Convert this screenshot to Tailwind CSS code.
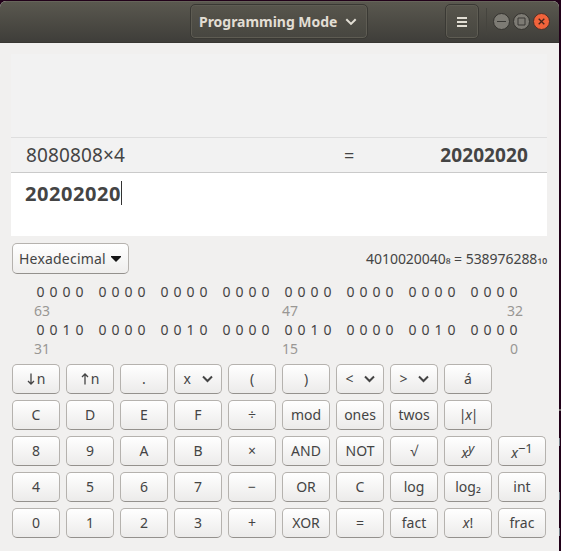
<!DOCTYPE html>
<html lang="en">
<head>
<meta charset="utf-8">
<title>Calculator</title>
<script src="https://cdn.jsdelivr.net/npm/@tailwindcss/browser@4"></script>
</head>
<body class="relative h-[551px] w-[561px] overflow-hidden bg-[#210119] pt-px font-['Noto_Sans','Open_Sans',sans-serif] text-[14px] text-[#444]">
<!-- slivers of the terminal window behind the calculator -->
<div class="absolute left-[559px] top-[409px] h-[2px] w-[2px] bg-[#77706f]"></div>
<div class="absolute left-[559px] top-[438px] h-[8px] w-px bg-[#77808a]"></div>
<div class="absolute left-[559px] top-[492px] h-[8px] w-px bg-[#77808a]"></div>
<div class="absolute left-[559px] top-[528px] h-[8px] w-px bg-[#77808a]"></div>
<main class="flex h-[550px] w-[559px] flex-col overflow-hidden rounded-t-[6px] bg-[#f1f0ef]">
  <header class="flex h-[42px] shrink-0 items-start border-t border-[#66645a] bg-linear-to-b from-[#5a584f] to-[#3e3d39] pt-[2px] shadow-[inset_0_-1px_0_#383733]">
    <button class="ml-[190px] flex h-[35px] w-[178px] shrink-0 items-center rounded-[5px] border border-[#3a3934] bg-linear-to-b from-[#57554c] to-[#474640] pl-[8px] font-bold text-[#e2ded4] shadow-[inset_0_0_0_1px_#5e5c53]">
      <span class="w-[140px] whitespace-nowrap text-left tracking-[-0.03px]">Programming Mode</span>
      <svg class="ml-[6px] h-[8px] w-[12px]" viewBox="0 0 12 8" fill="none" stroke="#e2ded4" stroke-width="2"><path d="M1.3 1.2 6 5.9l4.7-4.7"/></svg>
    </button>
    <button class="ml-[77px] flex h-[35px] w-[34px] shrink-0 items-center justify-center rounded-[5px] border border-[#3a3934] bg-linear-to-b from-[#57554c] to-[#474640] shadow-[inset_0_0_0_1px_#5e5c53]">
      <svg class="h-[10px] w-[10px]" viewBox="0 0 10 10" fill="#e2ded4"><path d="M0 0h10v2H0zM0 4h10v2H0zM0 8h10v2H0z"/></svg>
    </button>
    <div class="ml-[7px] mt-[4px] h-[27px] w-px bg-[#45443e]"></div>
    <div class="ml-[6px] mt-[9px] flex gap-[3px]">
      <svg class="size-[17px]" viewBox="0 0 17 17"><circle cx="8.5" cy="8.5" r="8" fill="#7d7b74" stroke="#34332f"/><path d="M4 8.5h9" stroke="#3a3935" fill="none"/></svg>
      <svg class="size-[17px]" viewBox="0 0 17 17"><circle cx="8.5" cy="8.5" r="8" fill="#7d7b74" stroke="#34332f"/><path d="M5 5h7v7H5z" stroke="#3a3935" fill="none"/></svg>
      <svg class="size-[17px]" viewBox="0 0 17 17"><circle cx="8.5" cy="8.5" r="8" fill="#f0633b" stroke="#4b3029"/><path d="m5.7 5.7 5.6 5.6m0-5.6-5.6 5.6" stroke="#41251c" stroke-width="1.3" fill="none"/></svg>
    </div>
  </header>

  <section class="ml-[11px] mt-[11px] w-[536px] shrink-0 bg-[#f2f2f2]">
    <div class="h-[84px] border-b border-[#dedede]"></div>
    <div class="flex h-[35px] items-center border-b border-[#cacaca] pl-[15px] pr-[19px] text-[19px] leading-[28px]">
      <span class="w-[318px] tracking-[0.13px]">8080808×4</span>
      <span class="w-[40px] text-[18px]">=</span>
      <span class="ml-auto whitespace-nowrap font-bold tracking-[0.1px]">20202020</span>
    </div>
    <div class="flex h-[63px] items-start bg-white pl-[14px] pt-[8px]">
      <span class="text-[20px] font-bold leading-[26px] tracking-[0.55px]">20202020</span><span class="h-[24px] w-px bg-[#333]"></span>
    </div>
  </section>

  <section class="ml-[12px] mt-[7px] flex h-[31px] w-[536px] shrink-0 items-center">
    <button class="flex h-[31px] w-[117px] items-center rounded-[5px] border border-[#b5b2ae] border-b-[#94918d] bg-linear-to-b from-white to-[#efeeed] pl-[6px]">
      <span class="w-[88px] whitespace-nowrap text-left tracking-[0.2px]">Hexadecimal</span>
      <svg class="ml-[4px] h-[6px] w-[10px]" viewBox="0 0 10 6"><path d="M0 0h10v1L5 6 0 1z" fill="#151515"/></svg>
    </button>
    <div class="ml-auto flex whitespace-pre pr-px tracking-[-0.05px]"><span>4010020040</span><span class="-mt-[2px]">₈</span><span> = 538976288</span><span class="-mt-[2px]">₁₀</span></div>
  </section>

  <section id="bits" class="ml-[34px] mt-[8px] h-[76px] w-[490px] shrink-0"></section>

  <section id="keys" class="ml-[12px] mt-[6px] grid w-[534px] shrink-0 grid-cols-[repeat(10,48px)] gap-[6px]"></section>
</main>
<script>
  const rows = [
    ['0000 0000 0000 0000 0000 0000 0000 0000', '63', '47', '32'],
    ['0010 0000 0010 0000 0010 0000 0010 0000', '31', '15', '0']
  ];
  document.getElementById('bits').innerHTML = rows.map(([bits, a, b, c]) =>
    `<div class="flex h-[19px] items-center gap-[10px]">${bits.split(' ').map(g =>
      `<div class="flex">${[...g].map(d => `<span class="w-[13px] text-center">${d}</span>`).join('')}</div>`).join('')}</div>
    <div class="flex h-[19px] items-center text-[#999794]"><span class="w-[248px]">${a}</span><span>${b}</span><span class="ml-auto ${c === '0' ? 'pr-[6px]' : 'pr-px'}">${c}</span></div>`).join('');

  const drop = s => `<span class="w-[18px] text-left">${s}</span><svg class="h-[8px] w-[11px]" viewBox="0 0 11 8" fill="none" stroke="#444" stroke-width="2"><path d="m1 1.5 4.5 4.5L10 1.5"/></svg>`;
  const arrow = (d) => `<svg class="mr-[2px] h-[12px] w-[8px]" viewBox="0 0 8 12" fill="none" stroke="#444" stroke-width="1.3"><path d="${d}"/></svg>n`;
  const keys = [
    arrow('M4 0.5v10.5M1 8l3 3 3-3'), arrow('M4 11.5V1M1 4l3-3 3 3'), '.', drop('x'), '(', ')', drop('&lt;'), drop('&gt;'), 'á', null,
    'C', 'D', 'E', 'F', '÷', 'mod', 'ones', 'twos', '<span class="tracking-[-1.2px]">|<i>x</i>|</span>', null,
    '8', '9', 'A', 'B', '×', 'AND', 'NOT', '√', '<i class="pt-[3px]">x</i><i class="mb-[4px] text-[13px]">y</i>', '<i class="pt-[3px]">x</i><span class="mb-[4px] text-[13px]">−1</span>',
    '4', '5', '6', '7', '−', 'OR', 'C', 'log', 'log<span class="-mt-[2px]">₂</span>', 'int',
    '0', '1', '2', '3', '+', 'XOR', '=', 'fact', '<i>x</i>!', 'frac'
  ];
  document.getElementById('keys').innerHTML = keys.map(k => k === null ? '<div></div>' :
    `<button class="flex h-[30px] items-center justify-center whitespace-nowrap rounded-[5px] border border-[#b5b2ae] border-b-[#94918d] bg-linear-to-b from-white to-[#ecebea] pb-px">${k}</button>`).join('');
</script>
</body>
</html>
